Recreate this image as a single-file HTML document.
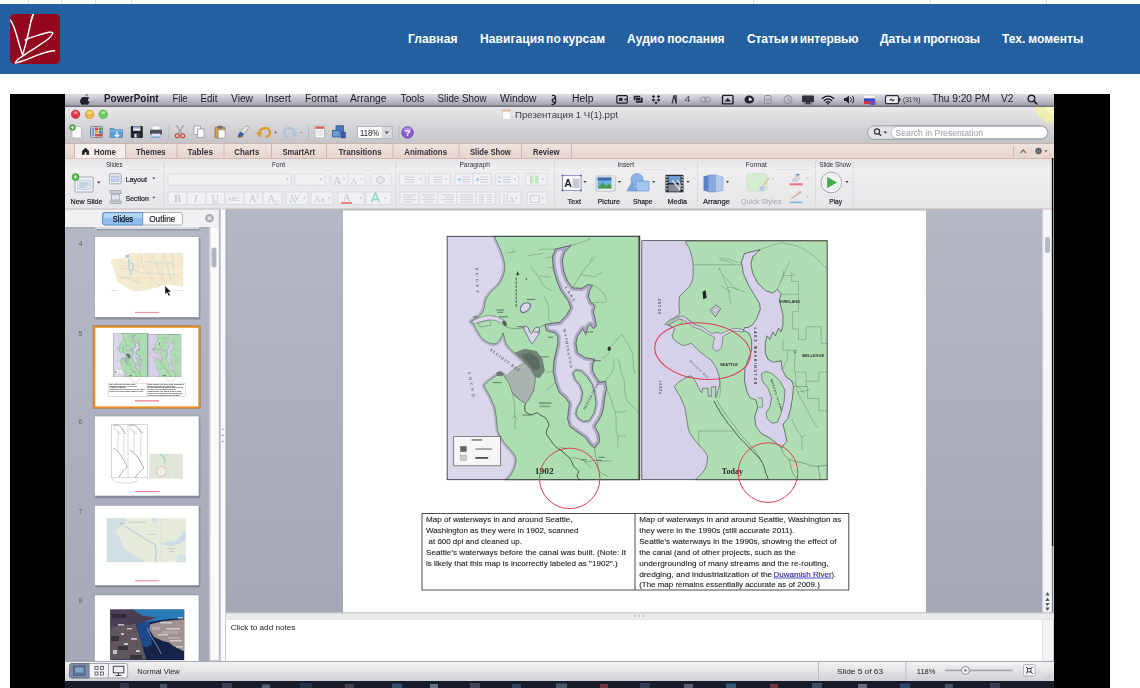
<!DOCTYPE html>
<html><head><meta charset="utf-8">
<style>
*{box-sizing:border-box;margin:0;padding:0}
html,body{width:1140px;height:688px;overflow:hidden;background:#fff;font-family:"Liberation Sans",sans-serif}
.a{position:absolute}
#top{left:0;top:0;width:1140px;height:4px;background:#fff}
#top i{position:absolute;top:0;width:1px;height:4px;background:#dedede}
#hdr{left:0;top:4px;width:1140px;height:69.700px;background:#24609f}
#logo{left:10px;top:14px;width:50px;height:50px;border-radius:4.5px;background:#93081f;overflow:hidden}
.nav{top:32px;color:#fff;font-weight:bold;font-size:12px;line-height:14px;white-space:nowrap;letter-spacing:0.05px}
#vid{left:10px;top:94px;width:1100px;height:594px;background:#000}
#scr{left:65px;top:94px;width:988px;height:594px;background:#a9adbb;overflow:hidden;filter:blur(.4px)}
#scr .t{position:absolute;white-space:nowrap;color:#222;font-size:9px;line-height:10px}
</style></head><body>
<div class="a" id="top"><i style="left:28px"></i><i style="left:61px"></i><i style="left:95px"></i><i style="left:131px"></i><i style="left:753px"></i><i style="left:930px"></i><i style="left:1046px"></i></div>
<div class="a" id="hdr"></div>
<div class="a" id="logo"><svg width="50" height="50" viewBox="0 0 50 50"><g fill="none" stroke="#fff" stroke-linecap="round" stroke-linejoin="round"><path d="M0 5.800C3 9 5.500 17 7.400 24C9 29.500 11 36.500 12.600 40.800" stroke-width="1.450"/><path d="M12.600 40.800C14.300 36 16 29 17.200 24.200C18.500 19 20 12 21 7" stroke-width="1.450"/><path d="M21 7L23.200 .300" stroke-width="1.900"/><path d="M15.100 26C19 24.200 23 22.800 26.800 21.700C31 20.300 36 18.800 39 18.300C41.500 17.900 43.300 18.300 42.700 19.500C42 21 40.500 23 39 24.200C35 27.500 31 30 26.800 32.800C22.500 35.700 18 38.500 14.500 40.800C12 42.500 10 43.800 8.400 45C7 46.200 5.800 47.800 5.300 49C8 48.500 11.500 47.300 14.500 46.300C18.500 44.800 23 43 26.800 41.400C31 39.800 35.500 38.300 39 37.500C41 37 43 36.800 44.600 36.700" stroke-width="1.400"/></g></svg></div>
<div class="a nav" style="left:408px;letter-spacing:.12px">Главная</div>
<div class="a nav" style="left:480px;letter-spacing:.1px;word-spacing:-1.8px">Навигация по курсам</div>
<div class="a nav" style="left:627px;word-spacing:-.8px">Аудио послания</div>
<div class="a nav" style="left:747px;letter-spacing:-.1px;word-spacing:-1.1px">Статьи и интервью</div>
<div class="a nav" style="left:880px;letter-spacing:-.08px;word-spacing:-.85px">Даты и прогнозы</div>
<div class="a nav" style="left:1002px;word-spacing:-.7px">Тех. моменты</div>
<div class="a" id="vid"></div>
<svg class="a" style="left:0;top:0" width="1140" height="688" viewBox="0 0 1140 688" font-family="Liberation Sans, sans-serif">
<defs>
<clipPath id="cv"><rect x="65.900" y="94" width="987.400" height="594"/></clipPath>
<linearGradient id="gm" x1="0" y1="0" x2="0" y2="1"><stop offset="0" stop-color="#dedee4"/><stop offset=".55" stop-color="#bcbcc6"/><stop offset="1" stop-color="#9a9aa6"/></linearGradient>
<linearGradient id="gt" x1="0" y1="0" x2="0" y2="1"><stop offset="0" stop-color="#e9e9eb"/><stop offset=".4" stop-color="#d9d9dc"/><stop offset="1" stop-color="#c4c4c9"/></linearGradient>
<linearGradient id="gtab" x1="0" y1="0" x2="0" y2="1"><stop offset="0" stop-color="#f0e3de"/><stop offset="1" stop-color="#e6d3cd"/></linearGradient>
<linearGradient id="grib" x1="0" y1="0" x2="0" y2="1"><stop offset="0" stop-color="#e4e4e7"/><stop offset=".2" stop-color="#efeff1"/><stop offset="1" stop-color="#e6e6e9"/></linearGradient>
<linearGradient id="gmain" x1="0" y1="0" x2="0" y2="1"><stop offset="0" stop-color="#b4b7c4"/><stop offset="1" stop-color="#a2a6b5"/></linearGradient>
<linearGradient id="gside" x1="0" y1="0" x2="0" y2="1"><stop offset="0" stop-color="#b6b9c6"/><stop offset="1" stop-color="#a4a8b7"/></linearGradient>
<linearGradient id="gstat" x1="0" y1="0" x2="0" y2="1"><stop offset="0" stop-color="#f4f4f5"/><stop offset="1" stop-color="#d2d2d6"/></linearGradient>
<filter id="bl" x="0" y="0" width="1140" height="688" filterUnits="userSpaceOnUse"><feGaussianBlur stdDeviation="0.55"/></filter>
</defs>
<g clip-path="url(#cv)"><g filter="url(#bl)">
<!-- base -->
<rect x="65" y="94" width="989" height="594" fill="#a9adbb"/>
<!-- menubar -->
<!-- title + toolbar -->
<rect x="65" y="106.500" width="989" height="37.500" fill="url(#gt)"/>
<ellipse cx="1056" cy="105" rx="21" ry="19" fill="#f4f0a4" opacity=".8"/><ellipse cx="1057" cy="104" rx="12" ry="11" fill="#fbf8c8" opacity=".85"/>
<rect x="65" y="94" width="989" height="12.200" fill="url(#gm)"/>
<rect x="65" y="105.700" width="989" height="1.100" fill="#5c5c68"/>
<!-- tab bar -->
<rect x="65" y="143.5" width="989" height="15" fill="url(#gtab)"/>
<rect x="65" y="143" width="989" height="1" fill="#c9b5b0"/>
<rect x="74.5" y="144" width="50.5" height="15" fill="#f6eeec"/>
<g fill="#cdb6b0"><rect x="74" y="144" width="1" height="14"/><rect x="125" y="144" width="1" height="14"/><rect x="176.5" y="144" width="1" height="14"/><rect x="223.5" y="144" width="1" height="14"/><rect x="271" y="144" width="1" height="14"/><rect x="326" y="144" width="1" height="14"/><rect x="392.5" y="144" width="1" height="14"/><rect x="458.5" y="144" width="1" height="14"/><rect x="521" y="144" width="1" height="14"/><rect x="571" y="144" width="1" height="14"/><rect x="1013" y="146" width="1" height="11"/></g>
<!-- ribbon -->
<rect x="65" y="158.5" width="989" height="50" fill="url(#grib)"/>
<rect x="65" y="158" width="989" height="1" fill="#dcc5c0"/>
<rect x="125" y="158" width="929" height="1" fill="#d4b9b3"/>
<rect x="65" y="208.200" width="989" height="1.300" fill="#e2d2d0"/>
<!-- MENU BAR TEXT -->
<g transform="translate(85.300 99.500) scale(1.200 1.020) translate(-84.300 -101)"><path d="M84.6 97.6c.2-1 .9-1.7 1.7-1.9.1.9-.6 1.9-1.7 1.900zM81 99.800c.9-1.600 2.400-1.400 3.200-.9.800-.5 2.400-.8 3.400.7-1.600 1-1.300 3.200.3 3.800-.600 1.600-1.700 3-2.600 3-.600 0-.9-.4-1.600-.4s-1 .4-1.600.4c-1.300 0-3.400-4.100-1.100-6.600z" fill="#22222a"/></g>
<g font-size="10" fill="#1c1c24" lengthAdjust="spacingAndGlyphs">
<text x="104" y="101.900" font-weight="bold" textLength="54.500" lengthAdjust="spacingAndGlyphs">PowerPoint</text>
<text x="172.500" y="101.900" textLength="15" lengthAdjust="spacingAndGlyphs">File</text>
<text x="200.500" y="101.900" textLength="17" lengthAdjust="spacingAndGlyphs">Edit</text>
<text x="231" y="101.900" textLength="22" lengthAdjust="spacingAndGlyphs">View</text>
<text x="265" y="101.900" textLength="26" lengthAdjust="spacingAndGlyphs">Insert</text>
<text x="305" y="101.900" textLength="32.500" lengthAdjust="spacingAndGlyphs">Format</text>
<text x="350" y="101.900" textLength="36.500" lengthAdjust="spacingAndGlyphs">Arrange</text>
<text x="400.500" y="101.900" textLength="24" lengthAdjust="spacingAndGlyphs">Tools</text>
<text x="437.500" y="101.900" textLength="49" lengthAdjust="spacingAndGlyphs">Slide Show</text>
<text x="500" y="101.900" textLength="36.500" lengthAdjust="spacingAndGlyphs">Window</text>
<text x="572" y="101.900" textLength="21.500" lengthAdjust="spacingAndGlyphs">Help</text>
<text x="903" y="101.600" font-size="8" textLength="17.500" lengthAdjust="spacingAndGlyphs" fill="#33333c">(31%)</text>
<text x="932" y="101.900" textLength="58" lengthAdjust="spacingAndGlyphs">Thu 9:20 PM</text>
<text x="1001" y="101.900" textLength="12.500" lengthAdjust="spacingAndGlyphs">V2</text>
<text x="684.500" y="101.900" font-size="9.500" textLength="6" lengthAdjust="spacingAndGlyphs" fill="#44444e">4</text>
</g>
<g transform="translate(0 -.9)">
<!-- script icon -->
<path d="M552 96.500c2.500-.8 4 .6 2.800 2.200-1 1.300-3 1.200-2.600 2.900.3 1.300 2.400 1.200 2.200 2.800-.2 1.200-1.800 1.500-2.800.8M555.500 97.500v7" fill="none" stroke="#22222a" stroke-width="1.300"/>
<!-- right status icons -->
<g fill="#24242c">
<rect x="616.800" y="96.500" width="10.500" height="7.500" rx="1" fill="none" stroke="#24242c" stroke-width="1.200"/><rect x="619" y="98.800" width="3.500" height="3" /><path d="M624 100.300l2.500-1.500v3z"/>
<path d="M633.500 96.500h7v5h-7zM635.500 98.500h7.500v5.500h-7.500z" stroke="#d0d0d8" stroke-width=".5"/>
<path d="M653.500 96l1.800 1.400-1.800 1.400-1.800-1.400zM658.500 96l1.800 1.400-1.800 1.400-1.800-1.400zM653.500 99.500l1.800 1.400-1.800 1.400-1.800-1.400zM658.500 99.500l1.800 1.400-1.800 1.400-1.800-1.400zM656 102.300l1.800 1.400-1.800 1.300-1.800-1.300z"/>
<path d="M671.500 104.500l2-8.500h1.200l2 8.500h-1.300l-1.300-6-1.300 6zM675.500 96h1.300v8.500h-1.300z" fill="#33333c"/>
</g>
<g fill="none" stroke="#8c8c98" stroke-width="1">
<ellipse cx="703.500" cy="100.500" rx="3" ry="2.600"/><ellipse cx="707.500" cy="100.500" rx="3" ry="2.600"/>
<rect x="764.500" y="96.500" width="6.500" height="8" rx=".8"/><path d="M766.300 99l1.500 3 1.500-3"/>
<circle cx="788" cy="100.500" r="4"/><path d="M788 98v2.700l2 1"/>
</g>
<rect x="722.500" y="96.300" width="10.500" height="8.500" rx="1" fill="none" stroke="#22222a" stroke-width="1.400"/><path d="M724.800 102.500l3-3.500 3 3.500z" fill="#22222a"/>
<path d="M749 96.300c3 0 5 1.800 5 4.200s-2 4-5 4c-2.600 0-4.500-1.700-4.500-4.100s2-4.100 4.500-4.100z" fill="#22222a"/><path d="M749 98.500c1.600.3 2.800 1.200 3.200 2.500-1 .800-2.300.900-3.600.300z" fill="#e6e6ec"/>
<rect x="802" y="96.300" width="12" height="6.800" rx=".8" fill="#33333c"/><rect x="806" y="103" width="4" height="1.300" fill="#33333c"/><rect x="804.500" y="104.200" width="7" height="1" fill="#33333c"/>
<g fill="none" stroke="#22222a" stroke-width="1.300" stroke-linecap="round"><path d="M822.300 99.300a8.500 8.500 0 0 1 11.400 0M824.200 101.400a5.600 5.600 0 0 1 7.600 0M826.200 103.300a2.700 2.700 0 0 1 3.600 0"/></g><circle cx="828" cy="104.600" r=".9" fill="#22222a"/>
<path d="M844 99h2l3-2.700v8.400l-3-2.700h-2z" fill="#22222a"/><path d="M850.500 98.300a3.300 3.300 0 0 1 0 4.400M852.300 96.800a5.500 5.500 0 0 1 0 7.400" fill="none" stroke="#22222a" stroke-width="1"/>
<rect x="864" y="96.500" width="11" height="2.800" fill="#f2f2f6"/><rect x="864" y="99.300" width="11" height="2.800" fill="#2a44c8"/><rect x="864" y="102" width="11" height="2.800" fill="#d42a3a"/><rect x="869.500" y="101" width="6" height="5" rx="1" fill="#6a4ec4"/>
<rect x="885.500" y="96.500" width="13" height="8" rx="1.300" fill="#eeeef2" stroke="#2c2c34" stroke-width="1.200"/><rect x="899" y="99" width="1.400" height="3" fill="#2c2c34"/><path d="M889 101.500l2.500-2.500v1.500h3.500l-2.500 2.500v-1.500z" fill="#2c2c34"/>
<circle cx="1031.500" cy="99.500" r="3.300" fill="none" stroke="#22222a" stroke-width="1.400"/><path d="M1034 102l2.800 2.800" stroke="#22222a" stroke-width="1.600" stroke-linecap="round"/>
</g>
<!-- TITLE BAR -->
<circle cx="75.600" cy="114.300" r="4.200" fill="#e2364a" stroke="#a82034" stroke-width=".6"/><ellipse cx="75.600" cy="112.600" rx="2.300" ry="1.400" fill="#f7a0a8" opacity=".8"/>
<circle cx="89.500" cy="114.300" r="4.200" fill="#f0b840" stroke="#c08a20" stroke-width=".6"/><ellipse cx="89.500" cy="112.600" rx="2.300" ry="1.400" fill="#fbe2a0" opacity=".8"/>
<circle cx="103.200" cy="114.300" r="4.200" fill="#6cc860" stroke="#3f9a3c" stroke-width=".6"/><ellipse cx="103.200" cy="112.600" rx="2.300" ry="1.400" fill="#c4f0b8" opacity=".8"/>
<rect x="502.500" y="109.500" width="8" height="10" fill="#fafafa" stroke="#c8c8cc" stroke-width=".5"/><rect x="502.500" y="109.500" width="8" height="2.500" fill="#e8a070" opacity=".6"/>
<text x="515" y="118" font-size="9.500" fill="#3c3c44" textLength="103" lengthAdjust="spacingAndGlyphs">Презентация 1 Ч(1).ppt</text>
<!-- yellow glow top-right -->

<!-- TOOLBAR ICONS (y centre 132) -->
<g>
<rect x="72" y="126.500" width="9.500" height="11.500" rx="1" fill="#fbfbfc" stroke="#a9abb2" stroke-width=".7"/><circle cx="72.500" cy="127.500" r="3" fill="#4fb44a" stroke="#2e8a30" stroke-width=".5"/><path d="M71 127.500h3M72.500 126v3" stroke="#fff" stroke-width=".9"/>
<rect x="90.500" y="126.500" width="12" height="11" rx="1" fill="#f0f0f2" stroke="#6c6e78" stroke-width=".8"/><rect x="91.500" y="127.500" width="3" height="9" fill="#7aa2d8"/><rect x="95" y="127.500" width="3.300" height="3" fill="#d84a3a"/><rect x="98.800" y="127.500" width="3" height="3" fill="#3c9a48"/><rect x="95" y="131" width="3.300" height="2.600" fill="#e8b030"/><rect x="98.800" y="131" width="3" height="2.600" fill="#4a78c8"/><rect x="95" y="134" width="7" height="2.500" fill="#c84a40"/>
<path d="M110 128.500h4l1 1.300h7.500v7.700h-12.500z" fill="#5f9ed2" stroke="#3c78ac" stroke-width=".6"/><path d="M110 131h12.500" stroke="#9cc6ea" stroke-width=".8"/><path d="M117 132v4.500M114.800 134.800l2.200 2.200 2.200-2.200" fill="none" stroke="#f4f8fc" stroke-width="1.300"/>
<rect x="130.800" y="126" width="12" height="12" rx="1" fill="#22242c"/><rect x="133" y="126.500" width="7.500" height="4.300" fill="#dfe4ee"/><rect x="133" y="127.300" width="7.500" height="1" fill="#6c98d0"/><rect x="133.500" y="133" width="6.500" height="5" fill="#3a3e4a"/><rect x="134.500" y="134" width="2" height="3.500" fill="#e8e8ee"/>
<rect x="152" y="126" width="8" height="4" fill="#fafafc" stroke="#b0b2b8" stroke-width=".5"/><rect x="150" y="129.800" width="12" height="5" rx="1" fill="#4a4e5a"/><rect x="151.500" y="133.800" width="9" height="4" fill="#dfe6f2" stroke="#8aa2c8" stroke-width=".5"/><rect x="152" y="136.500" width="8" height="1.200" fill="#5aa0d8"/>
<rect x="168.500" y="125" width=".8" height="15" fill="#b4b6bc"/>
<path d="M176.500 125.500l5.500 8.500M183.500 125.500l-5.500 8.500" stroke="#9a9ca6" stroke-width="1.300"/><circle cx="177.300" cy="135.800" r="2" fill="none" stroke="#d04a3c" stroke-width="1.300"/><circle cx="182.700" cy="135.800" r="2" fill="none" stroke="#d04a3c" stroke-width="1.300"/>
<rect x="194" y="126" width="6.500" height="8.500" fill="#fbfbfc" stroke="#8e9098" stroke-width=".7"/><rect x="197.500" y="129" width="6.500" height="8.500" fill="#fbfbfc" stroke="#8e9098" stroke-width=".7"/>
<rect x="215" y="127" width="10" height="11" rx="1" fill="#c8a058" stroke="#8a6a30" stroke-width=".7"/><rect x="217.500" y="125.800" width="5" height="2.600" rx=".8" fill="#6c6e78"/><rect x="218.500" y="130" width="6.500" height="8" fill="#fbfbfc" stroke="#a0a2a8" stroke-width=".5"/>
<path d="M246 125.500l3 2-5 6.500-3.500-2.200z" fill="#e8e4d8" stroke="#8a8270" stroke-width=".6"/><path d="M240.500 131.800l3.500 2.200c-1 2.500-4 4-6.500 3 .5-2 1.500-4 3-5.200z" fill="#3c5ca8"/><path d="M238 136.500c1.500.8 3.500.5 5-1" stroke="#8a5a30" stroke-width="1.200" fill="none"/>
<path d="M259 135.500c-.5-4 2-7.500 6-7.500 3 0 5 2 5 4.500s-2 4.300-4.300 4.300" fill="none" stroke="#e09a30" stroke-width="2.400"/><path d="M256 132.500l3.500 5 3-5z" fill="#e09a30"/>
<circle cx="275.500" cy="132.500" r=".9" fill="#555860"/>
<path d="M295 135.500c.5-4-2-7.500-6-7.500-3 0-5 2-5 4.500s2 4.300 4.300 4.300" fill="none" stroke="#a9c4de" stroke-width="2.400"/><path d="M298 132.500l-3.500 5-3-5z" fill="#a9c4de"/>
<circle cx="301.300" cy="132.500" r=".8" fill="#8a8c94"/>
<rect x="308" y="125" width=".8" height="15" fill="#b4b6bc"/>
<rect x="315" y="126" width="9.500" height="12" fill="#fafafc" stroke="#a6a8b0" stroke-width=".7"/><rect x="315.500" y="126.500" width="8.500" height="2.300" fill="#d85a4a"/><path d="M316.500 131h6.500M316.500 133h6.500M316.500 135h6.500" stroke="#c0c2c8" stroke-width=".7"/>
<rect x="336" y="125.800" width="7.500" height="6.500" fill="#4a7ac0" stroke="#2c4a88" stroke-width=".7"/><rect x="332.500" y="130.500" width="7.500" height="6.500" fill="#6c9ad8" stroke="#2c4a88" stroke-width=".7"/><rect x="341" y="132" width="4.500" height="6" fill="#3a5aa0" stroke="#2c4a88" stroke-width=".5"/>
<rect x="357.500" y="126.500" width="35" height="12" fill="#fcfcfd" stroke="#a4a6ae" stroke-width=".7"/><rect x="381.500" y="127" width="10.500" height="11" fill="#d8d9de"/><path d="M384.500 131.500h4.500l-2.250 2.800z" fill="#555860"/>
<text x="360" y="136" font-size="8.500" fill="#22242a" textLength="19" lengthAdjust="spacingAndGlyphs">118%</text>
<rect x="398.500" y="125" width=".8" height="15" fill="#b4b6bc"/>
<circle cx="407.500" cy="132.500" r="5.800" fill="#8a5ccc" stroke="#5e3aa0" stroke-width=".7"/><ellipse cx="407.500" cy="130" rx="4" ry="2.500" fill="#c0a4ea" opacity=".7"/>
<text x="405" y="136" font-size="9" font-weight="bold" fill="#fff">?</text>
</g>
<!-- search -->
<rect x="867.500" y="125.800" width="180.500" height="13.500" rx="6.700" fill="#e4e4e8" stroke="#8e9098" stroke-width=".8"/>
<rect x="891" y="126.500" width="156.500" height="12" rx="6" fill="#fdfdfe" stroke="#a0a2aa" stroke-width=".7"/>
<circle cx="877" cy="131.500" r="2.600" fill="none" stroke="#33353c" stroke-width="1.200"/><path d="M879 133.500l2 2.200" stroke="#33353c" stroke-width="1.300"/><path d="M883.500 131.500h3.600l-1.800 2.200z" fill="#33353c"/>
<text x="895.500" y="135.800" font-size="8.500" fill="#9a9ca6" textLength="87.500" lengthAdjust="spacingAndGlyphs">Search in Presentation</text>
<!-- TAB LABELS -->
<path d="M82 151l3.500-3.300 3.500 3.300v3.800h-2.600v-2.500h-1.800v2.500H82z" fill="#1e1e24"/>
<g font-size="8.300" font-weight="bold" fill="#33303a">
<text x="94" y="154.500" textLength="22" lengthAdjust="spacingAndGlyphs">Home</text>
<text x="136" y="154.500" textLength="29.600" lengthAdjust="spacingAndGlyphs">Themes</text>
<text x="187.500" y="154.500" textLength="25.500" lengthAdjust="spacingAndGlyphs">Tables</text>
<text x="234.300" y="154.500" textLength="25" lengthAdjust="spacingAndGlyphs">Charts</text>
<text x="282.500" y="154.500" textLength="32.500" lengthAdjust="spacingAndGlyphs">SmartArt</text>
<text x="338.500" y="154.500" textLength="43.300" lengthAdjust="spacingAndGlyphs">Transitions</text>
<text x="404.300" y="154.500" textLength="42.700" lengthAdjust="spacingAndGlyphs">Animations</text>
<text x="470" y="154.500" textLength="40.800" lengthAdjust="spacingAndGlyphs">Slide Show</text>
<text x="533" y="154.500" textLength="26.500" lengthAdjust="spacingAndGlyphs">Review</text>
</g>
<path d="M1020.500 153l2.700-3 2.700 3" fill="none" stroke="#6c6e78" stroke-width="1.200"/>
<circle cx="1038.500" cy="151" r="2.300" fill="none" stroke="#55575f" stroke-width="1.400"/><path d="M1038.500 147.500v7M1035 151h7M1036 148.500l5 5M1041 148.500l-5 5" stroke="#55575f" stroke-width=".8"/><path d="M1044.500 150.300h3l-1.500 2z" fill="#55575f"/>
<!-- RIBBON CONTENT -->
<g font-size="7.500" fill="#2c2c34">
<text x="106" y="167.300" textLength="16.500" lengthAdjust="spacingAndGlyphs">Slides</text>
<text x="272" y="167.300" textLength="13" lengthAdjust="spacingAndGlyphs">Font</text>
<text x="459.500" y="167.300" textLength="30.500" lengthAdjust="spacingAndGlyphs">Paragraph</text>
<text x="617.500" y="167.300" textLength="16.500" lengthAdjust="spacingAndGlyphs">Insert</text>
<text x="745.800" y="167.300" textLength="21" lengthAdjust="spacingAndGlyphs">Format</text>
<text x="819.300" y="167.300" textLength="31.500" lengthAdjust="spacingAndGlyphs">Slide Show</text>
</g>
<g stroke="#b8b9c0" stroke-width=".8" stroke-dasharray="1 1.500"><path d="M163.800 162v44M395.800 162v44M554.500 162v44M697.500 162v44M815.500 162v44M853.300 162v44"/></g>
<path d="M126 169.500h34M290 169.500h100M494 169.500h56M640 169.500h52M770 169.500h40" stroke="#dcdce0" stroke-width=".6"/>
<!-- new slide -->
<rect x="75" y="177" width="18" height="15" rx="1" fill="#f4f6fa" stroke="#8e949e" stroke-width=".8"/><rect x="77.500" y="180" width="13" height="9.500" fill="#dfe6f0" stroke="#a9b4c4" stroke-width=".5"/><path d="M79.500 183h9M79.500 185h9M79.500 187h6" stroke="#9aa8bc" stroke-width=".7"/>
<circle cx="75.500" cy="177" r="3.500" fill="#4cb848" stroke="#2e8a30" stroke-width=".5"/><path d="M73.700 177h3.600M75.500 175.200v3.600" stroke="#fff" stroke-width="1"/>
<path d="M97 181.500h3.600l-1.800 2.300z" fill="#44464e"/>
<g font-size="8" fill="#22232a" stroke="#22232a" stroke-width=".22">
<text x="70.500" y="204" textLength="32" lengthAdjust="spacingAndGlyphs">New Slide</text>
<text x="125.500" y="181.500" textLength="21.500" lengthAdjust="spacingAndGlyphs">Layout</text>
<text x="125.500" y="200.800" textLength="23.300" lengthAdjust="spacingAndGlyphs">Section</text>
<text x="567.500" y="204" textLength="13.500" lengthAdjust="spacingAndGlyphs">Text</text>
<text x="597.500" y="204" textLength="22.500" lengthAdjust="spacingAndGlyphs">Picture</text>
<text x="633" y="204" textLength="19.500" lengthAdjust="spacingAndGlyphs">Shape</text>
<text x="667.500" y="204" textLength="19.500" lengthAdjust="spacingAndGlyphs">Media</text>
<text x="703" y="204" textLength="27" lengthAdjust="spacingAndGlyphs">Arrange</text>
<text x="740.800" y="204" textLength="40.500" lengthAdjust="spacingAndGlyphs" fill="#a4a6ae" stroke="none">Quick Styles</text>
<text x="829.300" y="204" textLength="12.700" lengthAdjust="spacingAndGlyphs">Play</text>
</g>
<rect x="109.500" y="173.800" width="11.500" height="10" rx="1" fill="#f2f4f8" stroke="#8e949e" stroke-width=".8"/><rect x="111.500" y="176" width="7.500" height="5.500" fill="#c4d4ec" stroke="#8aa0c4" stroke-width=".5"/>
<rect x="110" y="190.500" width="11" height="3" fill="#c8ccd4" stroke="#8e949e" stroke-width=".6"/><rect x="111.500" y="194.500" width="8" height="5.500" fill="#dfe4ee" stroke="#8e949e" stroke-width=".6"/><rect x="110" y="201" width="11" height="2.600" fill="#c8ccd4" stroke="#8e949e" stroke-width=".6"/>
<path d="M152.300 177.500h3l-1.500 2zM152.300 196.800h3l-1.500 2z" fill="#44464e"/>
<!-- font boxes -->
<g fill="#f1f1f4" stroke="#d4d5da" stroke-width=".7">
<rect x="168" y="173.800" width="123.300" height="11.500" rx="1"/><rect x="295" y="173.800" width="30" height="11.500" rx="1"/>
<rect x="331" y="173.800" width="17" height="11.500" rx="1"/><rect x="348" y="173.800" width="17" height="11.500" rx="1"/><rect x="371" y="173.800" width="20" height="11.500" rx="1"/>
<rect x="168" y="192" width="19" height="12.500"/><rect x="187" y="192" width="19" height="12.500"/><rect x="206" y="192" width="19" height="12.500"/><rect x="225" y="192" width="19" height="12.500"/><rect x="244" y="192" width="19" height="12.500"/><rect x="263" y="192" width="19" height="12.500"/>
<rect x="286" y="192" width="22" height="12.500"/><rect x="311" y="192" width="22" height="12.500"/><rect x="338" y="192" width="26" height="12.500"/><rect x="366" y="192" width="25" height="12.500"/>
<rect x="399.500" y="173.800" width="25.500" height="11.500"/><rect x="428.800" y="173.800" width="21.500" height="11.500"/><rect x="455" y="173.800" width="18" height="11.500"/><rect x="473" y="173.800" width="18" height="11.500"/><rect x="495.800" y="173.800" width="23" height="11.500"/><rect x="525.500" y="173.800" width="21.500" height="11.500"/>
<rect x="400" y="192" width="19" height="12.500"/><rect x="419" y="192" width="19" height="12.500"/><rect x="438" y="192" width="19" height="12.500"/><rect x="457" y="192" width="19" height="12.500"/><rect x="476" y="192" width="19" height="12.500"/><rect x="500" y="192" width="21" height="12.500"/><rect x="527.500" y="192" width="19.500" height="12.500"/>
</g>
<g fill="#b9bbc4"><path d="M286 178.500h3l-1.500 2zM319.500 178.500h3l-1.500 2zM343 178.500h2.400l-1.200 1.600zM360 178.500h2.400l-1.200 1.600zM303 197.500h2.600l-1.300 1.700zM328 197.500h2.600l-1.300 1.700zM359.500 197.500h2.600l-1.300 1.700zM384 197.500h2.600l-1.300 1.700zM419.500 178.500h2.600l-1.300 1.700zM445 178.500h2.600l-1.300 1.700zM513.500 178.500h2.600l-1.300 1.700zM541.500 178.500h2.600l-1.300 1.700zM515 197.500h2.600l-1.300 1.700zM541.500 197.500h2.600l-1.300 1.700z"/></g>
<g font-family="Liberation Serif, serif" fill="#c2c4cc" font-size="10.500">
<text x="174" y="202.300" font-weight="bold">B</text><text x="194" y="202.300" font-style="italic">I</text><text x="211.500" y="202.300">U</text>
<text x="249" y="202.300">A</text><text x="256" y="198" font-size="5.500">2</text><text x="267.500" y="202.300">A</text><text x="275" y="203.500" font-size="5.500">2</text>
<text x="289" y="200.500" font-size="8.500">AV</text><text x="314" y="202.300" font-size="9">Aa</text>
<text x="333.500" y="183.500">A</text><text x="350.500" y="183.500" font-size="9">A</text>
<text x="343" y="201" font-size="10.500">A</text>
</g>
<text x="228" y="200.500" font-size="5.500" fill="#c2c4cc">ABC</text>
<path d="M211.500 203.300h8" stroke="#c2c4cc" stroke-width=".7"/>
<path d="M290 202.500l2-1.500M296 202.500l-2-1.500" stroke="#8ab0e0" stroke-width=".8"/>
<rect x="341" y="202" width="11" height="1.800" fill="#e07a80"/>
<path d="M371.500 202.500l4-10 4 10M373 199.500h5" fill="none" stroke="#8fd8cc" stroke-width="1.600" stroke-linejoin="round"/>
<path d="M376 181c0-3 3-5 6-4 2 1 3 3 2 5l-4 2z" fill="#e4e5ea" stroke="#b8bac2" stroke-width=".7"/>
<!-- paragraph icons (greyed) -->
<g stroke="#c4c6ce" stroke-width=".8">
<path d="M404.500 177h10M404.500 179.500h10M404.500 182h10M433.500 177h9M433.500 179.500h9M433.500 182h9M462 177h8M462 179.500h8M462 182h8M480 177h8M480 179.500h8M480 182h8M503 177h8M503 179.500h8M503 182h8"/>
<path d="M403 195h13M403 197.300h9M403 199.600h13M403 202h9M422 195h13M424 197.300h9M422 199.600h13M424 202h9M441 195h13M445 197.300h9M441 199.600h13M445 202h9M460 195h13M460 197.300h13M460 199.600h13M460 202h13M479 195h5M487 195h5M479 197.300h5M487 197.300h5M479 199.600h5M487 199.600h5M479 202h5M487 202h5"/>
<path d="M504 194v9M507 194v9M530.500 195.500h9v7h-9z" fill="none"/>
</g>
<path d="M457.500 179.500l3-2v4zM475.500 179.500l3-2v4z" fill="#9cc0ea"/><path d="M499.500 176l1.500 2h-3zM499.500 183l1.500-2h-3z" fill="#9cc0ea"/>
<rect x="530" y="175.500" width="3.500" height="8" fill="#c4e4c0"/><rect x="535" y="175.500" width="3.500" height="8" fill="#c4e4c0"/>
<text x="508.500" y="202.500" font-family="Liberation Serif, serif" font-size="8.500" fill="#c2c4cc">A</text>
<!-- Insert group icons -->
<rect x="562.500" y="175.500" width="18.500" height="15" fill="#fbfbfd" stroke="#6a72b8" stroke-width=".7"/><g fill="#4a52a8"><rect x="561.700" y="174.700" width="1.600" height="1.600"/><rect x="580.200" y="174.700" width="1.600" height="1.600"/><rect x="561.700" y="189.700" width="1.600" height="1.600"/><rect x="580.200" y="189.700" width="1.600" height="1.600"/></g>
<text x="564.300" y="187" font-size="10.500" font-weight="bold" fill="#22232a">A</text><rect x="572.500" y="178.500" width="7" height="9.500" fill="#c8cad2"/>
<rect x="596" y="176" width="19" height="15" rx="1" fill="#f4f4f6" stroke="#9ea0a8" stroke-width=".7"/><rect x="597.500" y="177.500" width="16" height="11" fill="#6cb0e8"/><path d="M597.500 188.500l5-6 4 3.500 3-2.500 4 5z" fill="#4c9a48"/><rect x="597.500" y="177.500" width="16" height="3" fill="#3c6ca8"/><path d="M611.500 176v15l3.500-3.500v-11.500z" fill="#e4e4e8"/>
<circle cx="637" cy="179.500" r="6" fill="#8ab4e8" stroke="#5a88c8" stroke-width=".6"/><rect x="636" y="181" width="13" height="10" rx="1" fill="#a4c4f0" stroke="#5a88c8" stroke-width=".6"/><path d="M627 191l5-9 5 9z" fill="#7aa6e0" stroke="#5a88c8" stroke-width=".6"/>
<rect x="665.500" y="174.800" width="18" height="17.500" fill="#2a2c34"/><rect x="668.500" y="176" width="12" height="7" fill="#6c9ad0"/><rect x="668.500" y="184.500" width="12" height="7" fill="#8a8c94"/><g fill="#dcdde2"><rect x="666.200" y="176" width="1.400" height="1.600"/><rect x="666.200" y="179" width="1.400" height="1.600"/><rect x="666.200" y="182" width="1.400" height="1.600"/><rect x="666.200" y="185" width="1.400" height="1.600"/><rect x="666.200" y="188" width="1.400" height="1.600"/><rect x="681.400" y="176" width="1.400" height="1.600"/><rect x="681.400" y="179" width="1.400" height="1.600"/><rect x="681.400" y="182" width="1.400" height="1.600"/><rect x="681.400" y="185" width="1.400" height="1.600"/><rect x="681.400" y="188" width="1.400" height="1.600"/></g><path d="M672 180l8 10M677 180c3 2 4 6 2 10" stroke="#dcdde2" stroke-width="1.500" fill="none"/>
<path d="M703.500 176.500l5-1.500v17l-5-1.500z" fill="#5a80c8"/><path d="M708.500 175h7v17h-7z" fill="#8aa8e0" stroke="#5a80c8" stroke-width=".5"/><path d="M715.500 175l7.500 2v13.500l-7.500 1.500z" fill="#b4c8ee" stroke="#7a98d0" stroke-width=".5"/>
<g fill="#33353c"><path d="M583.500 181h3l-1.500 2zM618 181h3l-1.500 2zM652.300 181h3l-1.500 2zM686.500 181h3l-1.500 2zM726 181h3l-1.500 2zM845.500 181h3l-1.500 2z"/></g>
<rect x="747" y="173.500" width="20" height="17.500" rx="3" fill="#d4ecd0" stroke="#c4d8c4" stroke-width=".6"/><path d="M763 186l6-8" stroke="#d8c8a0" stroke-width="1.600"/><circle cx="762" cy="188.500" r="2.500" fill="#b4c4e4"/>
<g fill="#c4c6ce"><path d="M771.500 178.500h2.600l-1.300 1.700zM806.300 177.500h2.600l-1.300 1.700zM806.300 196.500h2.600l-1.300 1.700z"/></g>
<path d="M792 181l4.500-6 3.500 3-3.500 4z" fill="#d4d8e4" stroke="#a8acbc" stroke-width=".5"/><path d="M795 175l3-1.500 2 2z" fill="#5a7ac0"/><rect x="789.500" y="183.300" width="13" height="2" fill="#e8707a"/>
<path d="M791 199l9-8 1.500 1.500z" fill="#e8b8a0" stroke="#c89880" stroke-width=".4"/><rect x="789.500" y="201.500" width="13" height="1.800" fill="#8ab0e4"/>
<circle cx="831.300" cy="182.500" r="10.300" fill="#fbfbfc" stroke="#9a9ca4" stroke-width=".9"/><circle cx="831.300" cy="182.500" r="8" fill="#f2f4f2" stroke="#d0d2d6" stroke-width=".5"/><path d="M827.500 177.500l9 5-9 5z" fill="#3cae48" stroke="#2a8a34" stroke-width=".5"/>



<!--CHROME-->
<!-- MAIN AREA -->
<rect x="65" y="209.5" width="989" height="452" fill="url(#gmain)"/>
<!-- left panel -->
<rect x="65" y="209.5" width="155" height="451.5" fill="url(#gside)"/>
<rect x="65" y="209.5" width="161" height="18" fill="#f1f1f3"/>
<rect x="65" y="227" width="145" height="1.5" fill="#8f93a3" opacity=".6"/>
<rect x="95.500" y="227.200" width="103.500" height="1.700" fill="#e6e6ec"/><rect x="96.500" y="228.900" width="103.500" height="1.600" fill="#6c7084" opacity=".45"/>
<!-- panel scrollbar + splitter -->
<rect x="209.500" y="227.500" width="9.500" height="433" fill="#fbfbfc"/>
<rect x="209.5" y="227.5" width="1" height="433" fill="#c8cad2"/>
<rect x="211.5" y="247.5" width="5" height="20" rx="2.5" fill="#b3b6c0"/>
<rect x="219" y="209.5" width="7" height="451.5" fill="#fbfbfc"/>
<rect x="218.800" y="209.500" width="1.900" height="452" fill="#b6bac8"/>
<rect x="225.5" y="209.5" width="1" height="451.5" fill="#9a9eae"/>
<g fill="#7c808c"><circle cx="222.600" cy="429.200" r=".8"/><circle cx="222.600" cy="435.400" r=".8"/><circle cx="222.600" cy="441.200" r=".8"/></g>
<!-- Slides / Outline -->
<rect x="102.5" y="212.5" width="80" height="12.5" rx="2.5" fill="#fcfcfd" stroke="#9a9ca6" stroke-width=".8"/>
<path d="M105 212.5h37.7v12.5H105a2.5 2.5 0 0 1-2.5-2.5v-7.5a2.5 2.5 0 0 1 2.5-2.5z" fill="#8fc0f2" stroke="#5a86b8" stroke-width=".8"/>
<rect x="104" y="213.3" width="38" height="4.5" fill="#c4defa" opacity=".7"/>
<text x="112.800" y="222" font-size="8.500" fill="#10151f" stroke="#10151f" stroke-width=".25" textLength="20.200" lengthAdjust="spacingAndGlyphs">Slides</text>
<text x="149.200" y="222" font-size="8.500" fill="#15181f" stroke="#15181f" stroke-width=".15" textLength="26.200" lengthAdjust="spacingAndGlyphs">Outline</text>
<circle cx="209.5" cy="218.2" r="4.3" fill="#a9abb2"/>
<path d="M207.7 216.4l3.6 3.6M211.3 216.4l-3.6 3.6" stroke="#f4f4f6" stroke-width="1.1"/>
<!-- thumbnails -->
<g font-size="7" fill="#5d6170">
<text x="78.5" y="246">4</text><text x="78.5" y="335.5">5</text><text x="78.5" y="424">6</text><text x="78.5" y="514">7</text><text x="78.5" y="603">8</text></g>
<rect x="95.500" y="317.3" width="104.500" height="2.200" fill="#6c7084" opacity=".55"/><rect x="199" y="238" width="1.500" height="80" fill="#6c7084" opacity=".4"/><rect x="95.500" y="496" width="104.500" height="2.200" fill="#6c7084" opacity=".55"/><rect x="199" y="418" width="1.500" height="79" fill="#6c7084" opacity=".4"/><rect x="95.500" y="585.3" width="104.500" height="2.200" fill="#6c7084" opacity=".55"/><rect x="199" y="507" width="1.500" height="79" fill="#6c7084" opacity=".4"/>
<g fill="#fff" stroke="#8e92a1" stroke-width=".6">
<rect x="94.5" y="236.3" width="104.5" height="81"/>
<rect x="94.5" y="416" width="104.5" height="80"/>
<rect x="94.5" y="505.3" width="104.5" height="80"/>
<rect x="94.5" y="595" width="104.5" height="70"/>
</g>
<rect x="94.3" y="326.8" width="105" height="80.6" fill="#fff" stroke="#e88a1e" stroke-width="2"/>
<rect x="93" y="325.5" width="107.6" height="83.2" fill="none" stroke="#7a5a30" stroke-width=".5" opacity=".6"/>
<!-- THUMB 4: washington state map -->
<path d="M110.900 260.400L116 259L121 258.800L125.300 258.100L127 255.500L129.300 253.600L182.900 253.300L182.900 286.300L175 285.500L168.500 284.300L163.300 285L159 286.800L155.400 287.600L148 289.500L142.300 290.200L137 291L133.200 290.800L130 289.500L127.900 287.600L122 284.500L117.500 282.300L117 279L116.200 275.800L115 272L113.600 267.900L112.300 265Z" fill="#f6ead0" stroke="#e8dcc0" stroke-width=".4"/>
<path d="M125.300 255.500l3.500-1.300 1 2.500-3.500 1z" fill="#a8c0e0"/>
<path d="M128.500 258.500c1 3-.5 6 .5 9s2.500 5 1.500 8M130.500 262c1.500 2 3 2 3 4.500s-1.500 3-1 5" fill="none" stroke="#b4d0dc" stroke-width="1.300"/>
<g fill="none" stroke="#bcd4d0" stroke-width=".6"><path d="M140 254c2 5 1 10 4 14s6 6 8 10 5 6 8 8M152 254c1 6 5 9 6 14s4 8 5 12M164 254c0 6 4 9 4 14s3 8 3 13M172 254c-1 6 2 10 1 15M120 268c5 2 9 0 14 2s9 4 14 3 10 2 15 1 10 2 16 1M146 262c5-1 9 2 14 1s8 1 12 0M118 276c4 2 8 1 12 3s8 2 12 4"/></g>
<g fill="none" stroke="#e4d4b0" stroke-width=".5"><path d="M138 254v34M150 254v33M162 254v30M174 254v31M118 266h64M120 278h62"/></g>
<rect x="135" y="311.900" width="24.300" height="1" fill="#ec6a80" opacity=".85"/>
<rect x="111" y="290.200" width="7" height=".5" fill="#c4c4c8"/><rect x="173.700" y="290.200" width="10" height=".5" fill="#c4c4c8"/>
<path d="M165 285.800v8.600l2-1.900 1.700 3.600 1.500-.700-1.700-3.500h2.800z" fill="#0c0c0c" stroke="#f4f4f4" stroke-width=".45"/>
<!-- THUMB 5 -->
<g transform="translate(33.03 291.04) scale(.1792)"><use href="#sl"/></g>
<rect x="135" y="400.300" width="24" height="1.100" fill="#ec6a80"/>
<!-- THUMB 6 -->
<g fill="none" stroke="#b4b0b6" stroke-width=".5">
<rect x="111.600" y="424.300" width="36" height="53.500"/>
<path d="M128 424.300v53.500M112 478l2 3.500c6 2 18 2 22 0l2-3.500"/>
</g>
<g fill="none" stroke="#8a8288" stroke-width="1" opacity=".7">
<path d="M113 426c3-2 6-1 8 1s2 5 5 7M129 426c3-2 6-1 8 1s3 5 6 6"/>
<path d="M114 448c3 3 6 5 8 9s4 6 5 10c-3 3-6 6-8 10M130 450c3 3 7 5 9 9s3 6 5 9c-3 3-7 6-9 10"/>
</g>
<g fill="none" stroke="#a49ca2" stroke-width=".5" opacity=".8">
<path d="M118 430c1 8-1 14 0 22M123 428c2 10 0 18 1 28M134 430c1 8-1 14 0 22M140 428c2 10 0 18 1 28"/>
</g>
<path d="M114 428c2 3 4 5 7 6M130 428c2 3 4 5 7 6" stroke="#d0a0a8" stroke-width=".6" fill="none"/>
<rect x="149.500" y="453.800" width="33.400" height="24.900" fill="#dfe8d8"/>
<path d="M160.500 454c1 2 3 2 4 4s-.5 3.500.5 5" stroke="#a8d4d4" stroke-width="1.400" fill="none"/>
<path d="M176 468c.5 3-.5 5 0 8" stroke="#b8dcd8" stroke-width=".8" fill="none"/>
<circle cx="161.300" cy="471.500" r="5" fill="#eef0e6" stroke="#e8b0b4" stroke-width=".9"/>
<rect x="135" y="491" width="24.300" height="1" fill="#ec6a80" opacity=".85"/>
<!-- THUMB 7 -->
<rect x="106.700" y="518.300" width="79.100" height="43.900" fill="#e7ebdc"/>
<polygon points="106.7,518.3 126.0,518.3 124.3,524.9 118.1,528.1 115.9,531.4 120.4,539.3 124.3,548.4 132.1,554.3 142.3,559.5 145.0,562.1 106.7,562.1" fill="#cfdfe3"/>
<polygon points="160.7,543.8 168.5,540.8 175.7,542.1 181.6,534.3 185.8,529.4 185.8,539.9 180.5,543.4 173.7,546.1 165.9,545.5" fill="#cbdde6"/>
<polygon points="151.5,518.3 158.0,518.3 156.1,522.9 152.8,522.2" fill="#d2e2e4"/>
<rect x="177" y="555" width="8.800" height="7.200" fill="#d2e2e6"/>
<polyline points="125.1,526.2 133.2,531.4 142.3,537.3 150.2,542.1 155.4,544.5 156.1,552.3 155.4,561.5" fill="none" stroke="#a8bed2" stroke-width=".9"/>
<path d="M161.300 518.300v43.900" stroke="#c8cec4" stroke-width=".5"/>
<g fill="#a4b0b8" opacity=".7"><rect x="128" y="521.800" width="18" height=".7"/><rect x="149" y="534" width="7" height=".7"/><rect x="167" y="548" width="8" height=".7"/><rect x="169" y="551" width="5" height=".7"/><rect x="120" y="523" width="4" height=".7"/></g>
<rect x="135" y="580.300" width="24.300" height="1" fill="#ec6a80" opacity=".85"/>
<!-- THUMB 8: aerial photo -->
<rect x="110.300" y="609.600" width="73.900" height="50.500" fill="#13244a"/>
<polygon points="129.3,609.6 184.2,609.6 184.2,618.5 168.5,619.0 158.0,620.4 148.9,622.1 139.7,620.7 133.2,616.2" fill="#2b7ab8"/>
<polygon points="136.1,621.1 148.9,622.1 150.4,624.3 149.1,629.3 151.5,637.1 151.5,645.0 146.3,647.6 142.3,646.3 138.7,633.2" fill="#1d4a8a"/>
<polygon points="110.3,609.6 133.2,609.6 142.3,615.5 156.7,617.7 146.3,621.1 135.8,624.3 110.3,629.9" fill="#4c3e52"/>
<polygon points="110.3,627.3 135.8,623.4 138.7,633.2 142.3,646.3 146.5,659.6 110.3,659.6" fill="#5e565e"/>
<polygon points="150.4,624.3 163.3,620.9 184.2,619.3 184.2,651.5 180.3,649.5 173.7,646.3 168.5,642.3 163.3,641.3 158.0,638.7 154.1,637.1 149.1,629.3" fill="#a09290"/>
<polyline points="146.9,627.9 151.5,637.1 158.0,647.6 161.3,654.1" fill="none" stroke="#8088a0" stroke-width="1"/>
<g fill="#d8d4d8" opacity=".85"><rect x="127" y="628" width="5" height="1.500"/><rect x="121" y="633" width="3" height="2"/><rect x="131" y="638" width="6" height="1.800"/><rect x="124" y="643" width="4" height="2"/><rect x="113" y="650" width="4" height="4"/><rect x="136" y="650" width="4" height="2"/><rect x="118" y="624" width="6" height="1.500"/><rect x="160" y="622" width="12" height="1.500"/><rect x="166" y="628" width="14" height="1.600"/><rect x="158" y="634" width="10" height="1.500"/><rect x="170" y="640" width="12" height="1.500"/><rect x="176" y="646" width="7" height="1.500"/><rect x="178" y="617" width="5" height="1.500"/></g>
<g fill="#2a2430" opacity=".7"><rect x="111" y="636" width="8" height="5"/><rect x="118" y="646" width="10" height="4"/><rect x="130" y="655" width="12" height="4"/><rect x="112" y="614" width="14" height="4"/></g>
<g fill="#bcb0ac" opacity=".8"><rect x="152" y="627" width="8" height="3"/><rect x="162" y="631" width="16" height="2.500"/><rect x="168" y="637" width="12" height="2"/></g>
<!-- slide -->
<rect x="343" y="210.5" width="583" height="402.5" fill="#fff"/>
<g id="sl">
<!-- MAP 1 : coords = zoom(2.648x) px minus (18,15) -->
<svg x="446.6" y="235.8" width="193.6" height="244.4" viewBox="0 0 512 647" preserveAspectRatio="none" overflow="hidden">
<rect x="0" y="0" width="512" height="647" fill="#dbd7ea"/>
<g transform="translate(-18,-15)">
<path d="M145 15 L530 15 L530 662 L175 662 C190 650 200 628 202 609 C200 596 195 590 190 584 C180 574 170 564 165 554 C158 544 153 534 152 524 L150 499 C149 489 147 479 145 469 C141 459 136 449 132 439 C127 430 120 420 117 411 C124 402 130 398 135 395 C145 388 152 382 160 379 C165 378 170 384 172 388 C176 394 180 400 184 408 C188 418 190 426 192 431 C200 442 214 452 227 459 C233 452 238 446 240 440 C246 430 250 422 250 415 C252 406 252 398 252 389 C250 380 246 374 240 368 C235 362 230 356 225 352 C220 346 214 340 210 336 C198 326 186 316 176 302 C172 292 170 280 167 272 C164 282 158 294 150 300 C140 304 126 298 115 290 C104 278 96 262 90 250 C86 246 82 244 82 242 C90 236 100 232 107 225 C114 218 118 206 120 190 C122 176 136 162 150 150 C162 138 170 120 172 100 C172 78 162 56 155 40 C150 30 147 22 145 15 Z" fill="none" stroke="#9892b4" stroke-width="12" opacity=".5" stroke-linejoin="round"/>
<path d="M145 15 L530 15 L530 662 L175 662 C190 650 200 628 202 609 C200 596 195 590 190 584 C180 574 170 564 165 554 C158 544 153 534 152 524 L150 499 C149 489 147 479 145 469 C141 459 136 449 132 439 C127 430 120 420 117 411 C124 402 130 398 135 395 C145 388 152 382 160 379 C165 378 170 384 172 388 C176 394 180 400 184 408 C188 418 190 426 192 431 C200 442 214 452 227 459 C233 452 238 446 240 440 C246 430 250 422 250 415 C252 406 252 398 252 389 C250 380 246 374 240 368 C235 362 230 356 225 352 C220 346 214 340 210 336 C198 326 186 316 176 302 C172 292 170 280 167 272 C164 282 158 294 150 300 C140 304 126 298 115 290 C104 278 96 262 90 250 C86 246 82 244 82 242 C90 236 100 232 107 225 C114 218 118 206 120 190 C122 176 136 162 150 150 C162 138 170 120 172 100 C172 78 162 56 155 40 C150 30 147 22 145 15 Z" fill="#addeb1" stroke="#4b5a50" stroke-width="1.700" stroke-linejoin="round"/>
<!-- tide flats + settlement -->
<path d="M172 388 L184 408 L192 431 L227 459 L240 440 L250 415 L252 389 L240 368 L225 352 L205 360 L188 374 Z" fill="#a9b4ae" stroke="#66736c" stroke-width="1"/>
<path d="M198 324 L226 314 L256 320 L272 342 L278 372 L264 392 L252 389 L240 368 L225 352 L210 336 Z" fill="#6c7c72" opacity=".92"/>
<path d="M214 330 L240 324 L260 340 L266 366 L250 372 L232 352 Z" fill="#56665c" opacity=".8"/>
<path d="M296 110 C300 120 306 126 314 128 C318 134 316 140 310 142 C302 140 298 132 294 124Z" fill="#5f6f66" opacity=".0"/>
<path d="M150 376 C156 372 166 374 170 382 C166 388 156 388 150 384Z" fill="#5f6f66" opacity=".85"/>
<!-- Salmon bay -->
<path d="M84 242 C100 232 114 228 128 226 C146 226 160 232 172 240 C176 246 178 252 176 256 C168 250 160 244 150 240 C136 236 120 238 108 244 C98 248 90 248 84 242Z" fill="#dbd7ea" stroke="#4b5a50" stroke-width="1.200"/>
<path d="M100 244 L132 238 L136 252 L106 256Z" fill="none" stroke="#4b5a50" stroke-width=".9"/>
<path d="M165 240 C172 238 178 244 176 252 C172 256 166 252 165 240Z" fill="#4f5e54"/>
<!-- Green lake -->
<path d="M216 200 C222 190 236 190 240 198 C240 208 228 220 218 218 C212 214 212 206 216 200Z" fill="#dbd7ea" stroke="#6a6684" stroke-width="3"/>
<!-- Lake Union -->
<path d="M222 256 C228 252 234 256 236 264 C238 272 242 278 246 270 C248 262 254 254 262 258 C266 266 262 276 256 284 C250 292 248 300 244 300 C238 296 236 288 232 280 C228 272 222 266 222 256Z" fill="#dbd7ea" stroke="#6a6684" stroke-width="2.600"/>
<path d="M176 256 C190 262 206 262 222 258 M262 260 C268 256 274 252 280 250" fill="none" stroke="#3f4d44" stroke-width="1.200"/>
<!-- Lake Washington -->
<clipPath id="lk1"><path d="M348 40 L330 58 L324 80 L328 110 L338 135 L352 153 L376 154 L392 144 L404 146 L396 160 L393 176 L400 192 L411 200 L406 216 L411 236 L414 254 L406 261 L398 250 L391 256 L386 276 L378 261 L371 271 L364 282 L360 300 L364 324 L385 338 L410 342 L404 356 L405 374 L413 389 L423 403 L438 400 L441 420 L436 444 L433 469 L428 489 L420 504 L410 519 L420 539 L423 559 L410 577 L398 568 L386 550 L364 535 L344 520 L338 500 L340 480 L343 460 L333 445 L316 430 L306 404 L300 374 L302 344 L308 320 L312 300 L312 282 L304 272 L282 266 L278 250 L300 246 L318 244 L326 235 L336 224 L346 206 L341 190 L320 160 L308 130 L300 100 L298 70 L306 50 Z"/></clipPath>
<path d="M348 40 L330 58 L324 80 L328 110 L338 135 L352 153 L376 154 L392 144 L404 146 L396 160 L393 176 L400 192 L411 200 L406 216 L411 236 L414 254 L406 261 L398 250 L391 256 L386 276 L378 261 L371 271 L364 282 L360 300 L364 324 L385 338 L410 342 L404 356 L405 374 L413 389 L423 403 L438 400 L441 420 L436 444 L433 469 L428 489 L420 504 L410 519 L420 539 L423 559 L410 577 L398 568 L386 550 L364 535 L344 520 L338 500 L340 480 L343 460 L333 445 L316 430 L306 404 L300 374 L302 344 L308 320 L312 300 L312 282 L304 272 L282 266 L278 250 L300 246 L318 244 L326 235 L336 224 L346 206 L341 190 L320 160 L308 130 L300 100 L298 70 L306 50 Z" fill="#dbd7ea"/>
<path d="M348 40 L330 58 L324 80 L328 110 L338 135 L352 153 L376 154 L392 144 L404 146 L396 160 L393 176 L400 192 L411 200 L406 216 L411 236 L414 254 L406 261 L398 250 L391 256 L386 276 L378 261 L371 271 L364 282 L360 300 L364 324 L385 338 L410 342 L404 356 L405 374 L413 389 L423 403 L438 400 L441 420 L436 444 L433 469 L428 489 L420 504 L410 519 L420 539 L423 559 L410 577 L398 568 L386 550 L364 535 L344 520 L338 500 L340 480 L343 460 L333 445 L316 430 L306 404 L300 374 L302 344 L308 320 L312 300 L312 282 L304 272 L282 266 L278 250 L300 246 L318 244 L326 235 L336 224 L346 206 L341 190 L320 160 L308 130 L300 100 L298 70 L306 50 Z" fill="none" stroke="#8e88ac" stroke-width="15" opacity=".6" clip-path="url(#lk1)" stroke-linejoin="round"/>
<path d="M348 40 L330 58 L324 80 L328 110 L338 135 L352 153 L376 154 L392 144 L404 146 L396 160 L393 176 L400 192 L411 200 L406 216 L411 236 L414 254 L406 261 L398 250 L391 256 L386 276 L378 261 L371 271 L364 282 L360 300 L364 324 L385 338 L410 342 L404 356 L405 374 L413 389 L423 403 L438 400 L441 420 L436 444 L433 469 L428 489 L420 504 L410 519 L420 539 L423 559 L410 577 L398 568 L386 550 L364 535 L344 520 L338 500 L340 480 L343 460 L333 445 L316 430 L306 404 L300 374 L302 344 L308 320 L312 300 L312 282 L304 272 L282 266 L278 250 L300 246 L318 244 L326 235 L336 224 L346 206 L341 190 L320 160 L308 130 L300 100 L298 70 L306 50 Z" fill="none" stroke="#3f4d44" stroke-width="2" stroke-linejoin="round"/>
<path d="M353 379 L360 371 L375 374 L390 389 L403 409 L410 434 L413 459 L408 484 L395 504 L380 506 L368 499 L360 486 L365 469 L375 451 L378 429 L370 409 L358 394 Z" fill="none" stroke="#8e88ac" stroke-width="10" opacity=".55" stroke-linejoin="round"/>
<path d="M353 379 L360 371 L375 374 L390 389 L403 409 L410 434 L413 459 L408 484 L395 504 L380 506 L368 499 L360 486 L365 469 L375 451 L378 429 L370 409 L358 394 Z" fill="#addeb1" stroke="#3f4d44" stroke-width="1.600" stroke-linejoin="round"/>
<!-- Duwamish river -->
<path d="M227 460 C222 468 226 474 225 479 C232 486 240 490 245 489 C252 484 258 482 262 486 C266 492 274 492 278 496 C284 504 290 512 288 519 C282 528 280 538 284 544 C290 552 296 558 298 564 C304 570 310 576 314 579 C320 582 326 586 328 590 C334 594 340 600 343 604 C348 610 352 618 353 624 C358 630 364 634 368 639 C364 644 362 650 364 654 L372 664" fill="none" stroke="#2f3c34" stroke-width="2.200" stroke-linejoin="round"/>
<path d="M314 579 C322 572 326 580 334 576 M343 604 C356 600 372 606 384 612 C396 616 404 606 418 610 C430 614 442 608 454 612 M384 612 C388 620 396 622 400 630" fill="none" stroke="#3f4d44" stroke-width="1"/>
<path d="M410 577 C410 590 412 600 416 612 C420 622 416 632 424 640 C430 648 440 646 446 654" fill="none" stroke="#3f4d44" stroke-width="1.100"/>
<!-- streams -->
<g fill="none" stroke="#4f5e54" stroke-width=".9">
<path d="M176 60 C186 58 196 62 204 54 M190 60 L196 48 M232 68 C246 64 262 66 274 60 M240 96 C250 110 262 122 270 140 C276 152 286 156 296 160 M262 122 C272 120 282 126 292 124 M276 176 C284 190 290 204 288 220 C286 236 292 242 296 246"/>
<path d="M352 153 C360 136 372 118 384 102 C392 90 404 84 412 70 M372 118 C384 122 396 118 408 124 C416 120 424 114 430 110 M396 84 L404 70 M348 40 C366 36 384 30 400 22 M306 50 C290 52 276 48 262 52 M298 70 L280 74 M300 100 L284 98"/>
<path d="M404 146 C416 150 428 160 436 172 C440 178 442 184 440 190 M400 192 C414 190 428 192 440 190"/>
<path d="M450 312 C462 300 470 284 482 276 C490 290 500 304 508 322 C514 340 508 360 516 380 M470 340 C480 356 476 376 486 392 C492 410 486 430 494 448 C502 462 514 470 526 484 M448 322 C444 332 436 338 428 340"/>
<path d="M441 420 C452 440 456 462 464 482 C470 504 462 524 470 544 C474 556 468 566 472 576 M464 482 C474 480 484 484 492 478 M470 544 C478 546 486 542 492 548"/>
<path d="M438 400 C444 388 454 382 458 370 C462 360 458 350 462 342"/>
<path d="M300 374 C292 372 286 378 280 376 M306 404 C296 410 290 420 282 424 M192 431 C196 450 200 470 198 490 C202 504 196 516 200 528 M198 490 L190 500 M198 490 L206 502"/>
</g>
<ellipse cx="448" cy="314" rx="4.500" ry="6" fill="#2f3a33"/>
<!-- tiny labels -->
<g fill="#55635a" opacity=".75">
<rect x="230" y="182" width="22" height="3"/><rect x="150" y="210" width="20" height="3"/><rect x="152" y="216" width="16" height="3"/><rect x="156" y="228" width="24" height="3"/><rect x="88" y="228" width="12" height="3"/>
<rect x="204" y="254" width="18" height="3"/><rect x="262" y="334" width="26" height="3"/><rect x="262" y="456" width="34" height="3.400"/><rect x="264" y="464" width="28" height="5" opacity=".6"/><rect x="140" y="402" width="24" height="3"/>
<rect x="404" y="344" width="22" height="3"/><rect x="286" y="282" width="14" height="3"/><rect x="218" y="488" width="24" height="3"/><rect x="374" y="606" width="14" height="3"/><rect x="420" y="600" width="16" height="3"/><rect x="416" y="608" width="12" height="3"/>
<rect x="250" y="268" width="14" height="3"/><rect x="390" y="268" width="16" height="3"/>
</g>
<path d="M202 126 L202 206" stroke="#3f4d44" stroke-width="2.600" stroke-dasharray="7 3"/>
<path d="M205 108l6 10-9 2z" fill="#3f4d44"/><path d="M228 126l4 5-5 1z" fill="#3f4d44"/>
<!-- curved labels -->
<g font-family="Liberation Serif, serif" font-weight="bold" fill="#5a5674" font-size="11">
<text transform="translate(94,100) rotate(88)" letter-spacing="7">PUGET</text>
<text transform="translate(74,376) rotate(80)" letter-spacing="7">SOUND</text>
<text transform="translate(132,318) rotate(37)" letter-spacing="2.500" font-size="10.500">ELLIOTT BAY</text>
<text transform="translate(330,152) rotate(58)" letter-spacing="5" font-size="10.500">LAKE</text>
<text transform="translate(326,262) rotate(80)" letter-spacing="3.500" font-size="10.500">WASHINGTON</text>
<text transform="translate(384,476) rotate(-62)" letter-spacing="1" font-size="8.500">MERCER ISLAND</text>
</g>
<!-- legend -->
<rect x="37" y="546" width="123" height="78" fill="#f6f6f8" stroke="#3c4640" stroke-width="1.600"/>
<rect x="84" y="554" width="28" height="3" fill="#4a5550"/>
<rect x="55" y="573" width="15" height="13" fill="#5d6a62" stroke="#333" stroke-width="1"/>
<rect x="55" y="597" width="15" height="12" fill="#c9d0cb" stroke="#777" stroke-width="1"/>
<rect x="94" y="578" width="44" height="3" fill="#6a7570"/><rect x="94" y="601" width="34" height="4" fill="#2a3530"/>
<text x="251" y="645" font-family="Liberation Serif, serif" font-weight="bold" font-size="20" fill="#2c2c30" textLength="50" lengthAdjust="spacingAndGlyphs">1902</text>
</g>
<rect x="1" y="1" width="510" height="645" fill="none" stroke="#2e2e32" stroke-width="3"/>
<rect x="506" y="0" width="6" height="647" fill="#3a3a3e" opacity=".55"/>
</svg>
<!-- MAP 2 : coords = zoom(2.648x, origin 630,230) px minus (30,27) -->
<svg x="641.3" y="240.2" width="186.3" height="240" viewBox="0 0 493 635" preserveAspectRatio="none" overflow="hidden">
<rect x="0" y="0" width="493" height="635" fill="#d6d0e8"/>
<g transform="translate(-30,-27)">
<path d="M147 29 L523 29 L523 662 L172 662 C184 650 196 640 200 629 C204 618 206 608 205 599 C202 590 196 584 192 579 C184 570 176 562 170 554 C164 546 158 538 155 529 L150 499 C149 489 147 479 145 469 C141 459 136 449 132 439 C127 430 121 422 117 414 C126 404 142 392 160 386 C166 388 170 394 172 399 C176 406 180 412 182 419 L190 431 L192 419 L207 419 L207 439 L215 441 L215 416 L227 414 L227 444 L235 419 C238 410 238 402 237 394 C236 384 233 376 230 369 C226 360 220 352 215 344 L208 340 C200 334 192 326 185 322 C180 316 176 312 172 310 C168 304 164 300 160 300 C152 304 146 306 140 305 C132 302 126 298 122 295 C116 290 112 284 112 280 C114 272 118 266 117 260 C112 256 108 256 107 255 C100 252 96 250 92 250 C98 244 102 240 107 237 C114 234 118 232 122 230 C128 226 132 222 132 220 C130 212 130 206 130 200 C130 190 130 182 132 175 C138 168 144 164 147 160 C154 154 158 150 160 145 C164 136 167 128 167 120 L167 90 C166 80 164 72 162 65 C160 56 158 50 155 45 C152 40 148 34 147 29 Z" fill="#b0deb4" stroke="#46554b" stroke-width="1.700" stroke-linejoin="round"/>
<path d="M100 248 C112 238 124 230 134 228 C146 228 156 236 168 248 C178 254 190 254 200 262 C206 268 212 272 218 274 C226 270 234 270 240 274 C248 272 258 266 268 262 C280 258 292 262 302 264 L300 270 C290 268 280 266 270 268 C262 272 254 278 246 282 C244 292 246 304 240 314 C234 322 224 322 220 314 C218 304 222 294 224 284 C216 280 206 276 198 270 C188 262 176 260 166 256 C154 246 144 238 134 236 C122 238 112 246 104 252 Z" fill="#d6d0e8" stroke="#3f4d44" stroke-width="1.300" stroke-linejoin="round"/>
<path d="M104 250 L130 232 L140 244 L112 258Z M150 236 L176 252" fill="none" stroke="#3f4d44" stroke-width=".9"/>
<path d="M212 212 L228 198 L240 208 L226 230 Z" fill="#d6d0e8" stroke="#2f3a33" stroke-width="1.600" stroke-linejoin="round"/>
<path d="M218 212 L228 204 L234 210 L226 222 Z" fill="none" stroke="#2f3a33" stroke-width=".8"/>
<path d="M345 52 L325 70 L320 90 L325 115 L338 140 L358 160 L378 167 L390 157 L400 170 L395 185 L400 205 L405 225 L405 250 L400 270 L393 260 L385 280 L378 270 L370 290 L363 280 L358 300 L358 325 L365 342 L380 350 L400 346 L403 369 L413 389 L428 399 L433 414 L430 444 L425 474 L418 499 L405 514 L410 534 L415 559 L400 576 L388 564 L368 549 L348 539 L333 519 L330 494 L338 469 L333 449 L318 444 L310 429 L303 399 L304 369 L312 344 L322 320 L322 290 L314 272 L300 266 L304 258 L313 258 L325 250 L335 235 L345 210 L343 195 L328 170 L313 145 L300 115 L295 85 L303 62 Z" fill="#d6d0e8" stroke="#3f4d44" stroke-width="1.900" stroke-linejoin="round"/>
<path d="M348 381 L360 374 L378 381 L398 401 L410 424 L408 454 L400 484 L390 509 L375 511 L363 499 L360 484 L370 469 L375 444 L365 419 L350 399 Z" fill="#b0deb4" stroke="#3f4d44" stroke-width="1.600" stroke-linejoin="round"/>
<path d="M338 444 L350 444 L352 468 L340 470" fill="#b0deb4" stroke="#3f4d44" stroke-width="1.100"/>
<!-- Duwamish waterway -->
<path d="M222 452 C228 464 234 474 240 484 C250 498 258 510 268 522 C280 536 288 550 300 560 C314 572 324 588 338 598 C348 610 356 624 358 638 C360 648 366 654 366 662" fill="none" stroke="#2f3c34" stroke-width="2.100"/>
<path d="M230 450 C240 468 252 488 266 504 C280 522 292 544 310 560 C326 578 340 596 350 614" fill="none" stroke="#3f4d44" stroke-width="1"/>
<path d="M400 576 C404 590 410 598 420 606 C436 614 450 614 464 618 C480 626 494 626 508 624 L523 622 M420 606 C426 618 424 630 430 640 C434 650 440 654 444 662 M498 624 L504 662" fill="none" stroke="#3f4d44" stroke-width="1.100"/>
<path d="M0 470 C14 480 22 494 26 510 M0 620 C10 624 18 634 22 648" fill="none" stroke="#3f4d44" stroke-width="1"/>
<!-- streams + boundaries -->
<g fill="none" stroke="#4f5e54" stroke-width=".9">
<path d="M167 92 L297 92 M236 72 C248 78 260 74 270 80 C280 86 288 84 296 88 M238 78 C250 82 262 82 272 88"/>
<path d="M236 100 C244 118 250 136 258 152 C264 168 262 182 268 196 M244 118 C256 128 266 142 276 152 C286 160 294 158 304 164 M258 152 C270 150 278 156 288 160 M240 146 C248 154 258 156 266 164 M232 108 L240 100"/>
<path d="M390 157 C398 140 404 122 412 106 C416 96 420 90 422 82 M404 122 C416 118 428 124 438 116 M398 138 C404 128 408 118 406 108 M345 52 C362 44 382 40 400 34"/>
<path d="M400 34 C420 36 440 40 458 50 C478 60 496 76 510 92 L523 104"/>
<path d="M436 318 C440 338 432 356 436 376 C442 396 436 412 444 430 C452 448 462 462 470 478 C478 494 486 512 498 524 M444 430 C456 424 466 428 476 422 M428 500 C436 520 446 536 454 548 C458 560 452 572 456 582 M454 548 L466 542 M428 399 C440 410 452 420 462 432"/>
<path d="M403 369 C408 362 410 352 416 346 C418 336 414 328 418 320"/>
<path d="M182 532 L278 532 M182 532 L182 572"/>
<path d="M400 170 L446 170 L446 136 L428 136 L428 110 M446 170 L446 216 L430 216 L430 262 L446 262 L446 290 L466 290 L466 256 L506 256 L506 300 L523 300"/>
<path d="M405 290 L405 318 L432 318 M436 376 L466 376 L466 400 L500 400 L500 376 L523 376 M433 414 L470 414 L470 446 L500 446 L500 478 L523 478 M466 400 L466 414"/>
<path d="M237 394 C242 410 240 430 236 446"/>
</g>
<ellipse cx="437" cy="322" rx="3" ry="4.500" fill="none" stroke="#2f3a33" stroke-width="1.200"/>
<path d="M192 164 l8 -5 l3 20 l-9 4z" fill="#1e2622"/>
<!-- labels -->
<g font-weight="bold" fill="#2c3430" font-size="7.500">
<text x="396" y="192" textLength="54" lengthAdjust="spacingAndGlyphs">KIRKLAND</text>
<text x="456" y="336" textLength="58" lengthAdjust="spacingAndGlyphs">BELLEVUE</text>
<text x="238" y="361" textLength="48" lengthAdjust="spacingAndGlyphs">SEATTLE</text>
<text transform="translate(328,258) rotate(90)" textLength="150" lengthAdjust="spacing" font-size="9">LAKE WASHINGTON</text>
<text transform="translate(372,396) rotate(72)" textLength="86" lengthAdjust="spacing" font-size="7">MERCER ISLAND</text>
<text transform="translate(158,348) rotate(44)" textLength="66" lengthAdjust="spacing" font-size="7" fill="#4a5560">ELLIOTT BAY</text>
<text transform="translate(82,222) rotate(-90)" textLength="40" lengthAdjust="spacing" font-size="7.500" fill="#4e4a66">SOUND</text>
<text transform="translate(86,434) rotate(-90)" textLength="36" lengthAdjust="spacing" font-size="7.500" fill="#4e4a66">PUGET</text>
</g>
<text x="243" y="645" font-family="Liberation Serif, serif" font-weight="bold" font-size="20" fill="#2c2c30" textLength="56" lengthAdjust="spacingAndGlyphs">Today</text>
</g>
<rect x="1" y="1" width="491" height="633" fill="none" stroke="#2e2e32" stroke-width="2.400"/>
</svg>
<!-- red circles -->
<circle cx="569.7" cy="478.4" r="30.2" fill="none" stroke="#d8404e" stroke-width="1"/>
<circle cx="768" cy="472.6" r="29.8" fill="none" stroke="#d8404e" stroke-width="1"/>
<ellipse cx="702.6" cy="351.2" rx="48" ry="28" fill="none" stroke="#dc3a58" stroke-width="1" transform="rotate(6 702.6 351.2)"/>
<!-- text table -->
<rect x="422" y="513.5" width="426.8" height="76.5" fill="#fff" stroke="#3a3a3e" stroke-width=".9"/>
<path d="M635 513.5v76.5" stroke="#3a3a3e" stroke-width=".9"/>
<g font-size="7.8" fill="#26262c" stroke="#26262c" stroke-width=".12">
<text x="426" y="522" textLength="146.6" lengthAdjust="spacingAndGlyphs">Map of waterways in and around Seattle,</text>
<text x="426" y="532.8" textLength="152.5" lengthAdjust="spacingAndGlyphs">Washington as they were in 1902, scanned</text>
<text x="428.6" y="543.7" textLength="93.4" lengthAdjust="spacingAndGlyphs">at 600 dpi and cleaned up.</text>
<text x="426" y="554.6" textLength="200" lengthAdjust="spacingAndGlyphs">Seattle's waterways before the canal was built. (Note: It</text>
<text x="426" y="565.6" textLength="191.7" lengthAdjust="spacingAndGlyphs">is likely that this map is incorrectly labeled as "1902".)</text>
<text x="639.2" y="522" textLength="202" lengthAdjust="spacingAndGlyphs">Map of waterways in and around Seattle, Washington as</text>
<text x="639.2" y="532.8" textLength="155.3" lengthAdjust="spacingAndGlyphs">they were in the 1990s (still accurate 2011).</text>
<text x="639.2" y="543.7" textLength="197.4" lengthAdjust="spacingAndGlyphs">Seattle's waterways in the 1990s, showing the effect of</text>
<text x="639.2" y="554.6" textLength="156.6" lengthAdjust="spacingAndGlyphs">the canal (and of other projects, such as the</text>
<text x="639.2" y="565.6" textLength="189.4" lengthAdjust="spacingAndGlyphs">undergrounding of many streams and the re-routing,</text>
<text x="639.2" y="576.5" textLength="133" lengthAdjust="spacingAndGlyphs">dredging, and industrialization of the</text>
<text x="773.5" y="576.5" textLength="58.1" lengthAdjust="spacingAndGlyphs" fill="#2a1fd0">Duwamish River</text>
<text x="831.8" y="576.5" textLength="4" lengthAdjust="spacingAndGlyphs">).</text>
<text x="639.2" y="587.4" textLength="180.6" lengthAdjust="spacingAndGlyphs">(The map remains essentially accurate as of 2009.)</text>
</g>
<rect x="773.5" y="577.6" width="58" height=".8" fill="#2a1fd0"/>

</g>
<!-- right scrollbar -->
<rect x="1042.3" y="209.5" width="11.5" height="404" fill="#f6f6f8"/>
<rect x="1042.3" y="209.5" width="1" height="404" fill="#cfd1d8"/>
<rect x="1045" y="237" width="5" height="16" rx="2.5" fill="#b5b8c2"/>
<g fill="#555a66"><path d="M1047.5 592l2.2 3.4h-4.4zM1047.5 597.5l2.2 3.4h-4.4zM1047.5 606.3l2.2-3.4h-4.4zM1047.5 611l2.2-3.4h-4.4z"/></g>
<rect x="1051.800" y="158" width="1.600" height="388" fill="#161618"/><rect x="1051.800" y="546" width="1.600" height="115" fill="#8a8c94"/>
<!-- notes -->
<rect x="226" y="612.600" width="828" height="7" fill="#ebebee"/>
<rect x="226" y="612.400" width="828" height=".9" fill="#b4b7c2"/>
<rect x="226" y="619" width="828" height=".8" fill="#d4d5da"/>
<rect x="226" y="619.600" width="816.500" height="42" fill="#fff"/>
<rect x="1042.500" y="619.600" width="11" height="42" fill="#f4f4f6"/>
<g fill="#9a9da8"><circle cx="635" cy="616" r=".75"/><circle cx="639" cy="616" r=".75"/><circle cx="643" cy="616" r=".75"/></g>
<text x="230.7" y="630" font-size="8" fill="#1c1c22" textLength="64.6" lengthAdjust="spacingAndGlyphs">Click to add notes</text>
<!-- status bar -->
<rect x="65" y="661.300" width="989" height="19.700" fill="url(#gstat)"/>
<rect x="65" y="660.900" width="989" height="1" fill="#a4a6b0"/>
<rect x="818" y="661" width="1" height="20" fill="#b9bbc3"/><rect x="905.5" y="661" width="1" height="20" fill="#b9bbc3"/>
<rect x="69.7" y="663.5" width="58" height="14.5" rx="2" fill="#f3f3f5" stroke="#8d909a" stroke-width=".8"/>
<path d="M71.7 663.5h17.3v14.5H71.7a2 2 0 0 1-2-2v-10.5a2 2 0 0 1 2-2z" fill="#7f8ea6" stroke="#5e6a80" stroke-width=".8"/>
<rect x="73.5" y="666" width="11.5" height="9.5" fill="#5c7392" stroke="#3f5370" stroke-width=".7"/>
<rect x="75" y="667.5" width="8.5" height="5" fill="#7fa6c8"/>
<path d="M89 663.5v14.5M108.5 663.5v14.5" stroke="#8d909a" stroke-width=".8"/>
<g fill="none" stroke="#444852" stroke-width=".8"><rect x="95" y="666.3" width="3" height="3"/><rect x="100.5" y="666.3" width="3" height="3"/><rect x="95" y="672" width="3" height="3"/><rect x="100.5" y="672" width="3" height="3"/></g>
<rect x="113.3" y="666.3" width="10.5" height="6.5" fill="#eef0f4" stroke="#3f434d" stroke-width="1"/><path d="M118.5 673v2M115.5 675.5h6" stroke="#3f434d" stroke-width="1"/>
<g font-size="8" fill="#23252c">
<text x="137.3" y="673.5" textLength="42.5" lengthAdjust="spacingAndGlyphs">Normal View</text>
<text x="837" y="673.5" textLength="46" lengthAdjust="spacingAndGlyphs">Slide 5 of 63</text>
<text x="916.8" y="673.5" textLength="18.7" lengthAdjust="spacingAndGlyphs">118%</text></g>
<rect x="945" y="669.6" width="68" height="1.6" rx=".8" fill="#a6a8b0"/>
<circle cx="965.5" cy="670.4" r="4" fill="#f2f2f4" stroke="#6f727c" stroke-width=".8"/><circle cx="965.5" cy="670.4" r="1.2" fill="#6f727c"/>
<rect x="1023.5" y="664.5" width="11.5" height="11.5" rx="1.5" fill="#f6f6f8" stroke="#9c9ea8" stroke-width=".7"/>
<path d="M1025.800 666.800l2.200 2.200M1032.700 666.800l-2.200 2.200M1025.800 673.700l2.200-2.200M1032.700 673.700l-2.200-2.200" stroke="#33363e" stroke-width="1"/><rect x="1027.600" y="668.600" width="3.300" height="3.300" fill="none" stroke="#33363e" stroke-width=".9"/>
<path d="M1046 679l5-5M1048.5 679l2.5-2.5" stroke="#b0b2ba" stroke-width=".6"/>
<!-- dock strip -->
<rect x="65" y="681" width="989" height="8" fill="#141a2c"/>
<g opacity=".8"><rect x="120" y="683" width="9" height="5" fill="#3a3f52"/><rect x="160" y="684" width="7" height="4" fill="#5a6074"/><rect x="222" y="683" width="10" height="5" fill="#444a60"/><rect x="262" y="684.500" width="8" height="3.500" fill="#6a7288"/><rect x="300" y="683" width="12" height="5" fill="#2c3850"/><rect x="345" y="684" width="9" height="4" fill="#5a4a50"/><rect x="392" y="683.500" width="10" height="4.500" fill="#3c5a7c"/><rect x="430" y="684" width="8" height="4" fill="#7a8294"/><rect x="470" y="683" width="10" height="5" fill="#4a5068"/><rect x="512" y="684" width="9" height="4" fill="#384a66"/><rect x="556" y="683.500" width="11" height="4.500" fill="#5c6478"/><rect x="600" y="684" width="8" height="4" fill="#863a44"/><rect x="640" y="683" width="10" height="5" fill="#3a4660"/><rect x="684" y="684" width="9" height="4" fill="#6a6e80"/><rect x="726" y="683.500" width="10" height="4.500" fill="#3c6a8c"/><rect x="770" y="684" width="8" height="4" fill="#8a3a48"/><rect x="812" y="683" width="10" height="5" fill="#4a5670"/><rect x="858" y="684" width="9" height="4" fill="#7a7e90"/><rect x="900" y="683.500" width="10" height="4.500" fill="#35507a"/><rect x="945" y="684" width="8" height="4" fill="#5a6278"/><rect x="990" y="683" width="10" height="5" fill="#40485e"/></g>
</g></g>
</svg>

</body></html>
